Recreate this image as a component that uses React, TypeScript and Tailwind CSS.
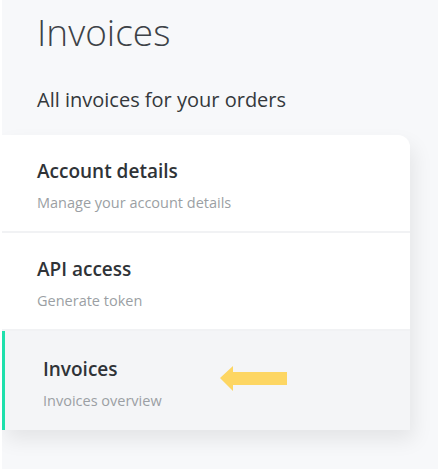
const items = [
  { title: "Account details", sub: "Manage your account details", active: false },
  { title: "API access", sub: "Generate token", active: false },
  { title: "Invoices", sub: "Invoices overview", active: true },
];

const Arrow = () => (
  <svg width="68" height="26" viewBox="0 0 68 26" className="mt-[-9px]">
    <polygon points="0,12 13,0 13,6 67,6 67,19 13,19 13,25" fill="#fdd663" />
  </svg>
);

export default function App() {
  return (
    <div
      className="w-[438px] h-[469px] bg-[#f7f8fa] border-l-2 border-white overflow-hidden"
      style={{ fontFamily: "'Open Sans', Lato, sans-serif" }}
    >
      <div className="pl-[35px] pt-[7px]">
        <h1 className="text-[37px] leading-[50px] font-light text-[#3d4247]">Invoices</h1>
        <p className="mt-[31px] text-[20px] leading-[24px] text-[#34383c]">All invoices for your orders</p>
      </div>
      <div className="mt-[23px] w-[408px] bg-white rounded-tr-[12px] shadow-[4px_10px_20px_rgba(0,0,0,0.08)]">
        {items.map((item, i) => (
          <div
            key={i}
            className={
              item.active
                ? "flex items-center h-[99px] pt-[5px] bg-[#f4f5f7] border-l-[3px] border-[#1ee0ac] pl-[38px]"
                : "flex items-center h-[98px] pt-[5px] border-b-2 border-[#f1f2f4] pl-[35px]"
            }
          >
            <div className={item.active ? "w-[177px]" : ""}>
              <div className="text-[19px] leading-[24px] font-semibold text-[#2f3337]">{item.title}</div>
              <div className="mt-[11px] text-[14.5px] leading-[18px] text-[#9b9fa4]">{item.sub}</div>
            </div>
            {item.active && <Arrow />}
          </div>
        ))}
      </div>
    </div>
  );
}
